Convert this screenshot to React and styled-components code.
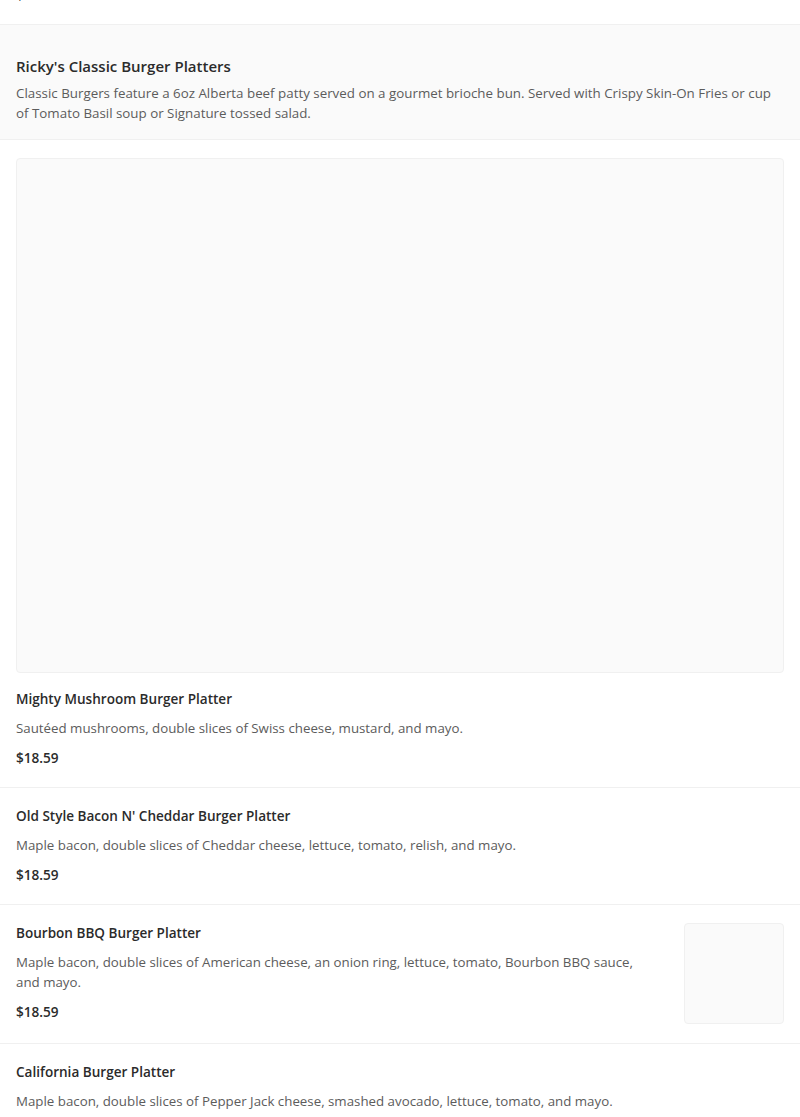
import React from "react";
import styled, { createGlobalStyle } from "styled-components";

const Global = createGlobalStyle`
  html, body { margin: 0; padding: 0; background: #fff; }
  body { font-family: "Open Sans", "Noto Sans", sans-serif; -webkit-font-smoothing: antialiased; }
  * { box-sizing: border-box; }
`;

const Viewport = styled.div`
  width: 800px;
  height: 1117px;
  overflow: hidden;
`;

const List = styled.div`
  display: flex;
  flex-direction: column;
  margin-top: -34px;
`;

const SectionHeader = styled.header`
  background: #fafafa;
  padding: 30px 16px 16px;
  border-bottom: 1px solid #f0f0f0;
`;

const SectionTitle = styled.h2`
  margin: 0 0 6px;
  font-size: 15px;
  line-height: 22px;
  font-weight: 600;
  color: #2b2b2b;
`;

const SectionDesc = styled.p`
  margin: 0;
  font-size: 13.35px;
  line-height: 20px;
  color: #5c5c5c;
`;

const Item = styled.article`
  display: flex;
  flex-direction: ${(p) => (p.$hero ? "column" : "row")};
  gap: ${(p) => (p.$hero ? "16px" : "48px")};
  padding: 18px 16px 19px;
  border-bottom: 1px solid #f0f0f0;
`;

const Body = styled.div`
  flex: 1;
  display: flex;
  flex-direction: column;
  gap: 9px;
`;

const Name = styled.h3`
  margin: 0;
  font-size: 13.55px;
  line-height: 20px;
  font-weight: 600;
  color: #2b2b2b;
`;

const Desc = styled.p`
  margin: 0;
  font-size: 13.3px;
  line-height: 20px;
  color: #5c5c5c;
`;

const Price = styled.div`
  margin-top: 1px;
  font-size: 13.6px;
  line-height: 20px;
  font-weight: 600;
  color: #2b2b2b;
`;

const Photo = styled.div`
  background: #fafafa;
  border: 1px solid #f0f0f0;
  border-radius: 4px;
  flex-shrink: 0;
  width: ${(p) => (p.$hero ? "100%" : "100px")};
  height: ${(p) => (p.$hero ? "515px" : "101px")};
`;

const items = [
  {
    name: "Mighty Mushroom Burger Platter",
    desc: "Sautéed mushrooms, double slices of Swiss cheese, mustard, and mayo.",
    price: "$18.59",
    hero: true,
  },
  {
    name: "Old Style Bacon N' Cheddar Burger Platter",
    desc: "Maple bacon, double slices of Cheddar cheese, lettuce, tomato, relish, and mayo.",
    price: "$18.59",
  },
  {
    name: "Bourbon BBQ Burger Platter",
    desc: "Maple bacon, double slices of American cheese, an onion ring, lettuce, tomato, Bourbon BBQ sauce, and mayo.",
    price: "$18.59",
    thumb: true,
  },
  {
    name: "California Burger Platter",
    desc: "Maple bacon, double slices of Pepper Jack cheese, smashed avocado, lettuce, tomato, and mayo.",
    price: "$18.59",
  },
];

export default function App() {
  return (
    <Viewport>
      <Global />
      <List>
        <Item>
          <Body>
            <Price>$18.59</Price>
          </Body>
        </Item>
        <SectionHeader>
          <SectionTitle>Ricky's Classic Burger Platters</SectionTitle>
          <SectionDesc>
            Classic Burgers feature a 6oz Alberta beef patty served on a gourmet brioche bun. Served with Crispy
            Skin-On Fries or cup of Tomato Basil soup or Signature tossed salad.
          </SectionDesc>
        </SectionHeader>
        {items.map((it) => (
          <Item key={it.name} $hero={it.hero}>
            {it.hero && <Photo $hero />}
            <Body>
              <Name>{it.name}</Name>
              <Desc>{it.desc}</Desc>
              <Price>{it.price}</Price>
            </Body>
            {it.thumb && <Photo />}
          </Item>
        ))}
      </List>
    </Viewport>
  );
}
